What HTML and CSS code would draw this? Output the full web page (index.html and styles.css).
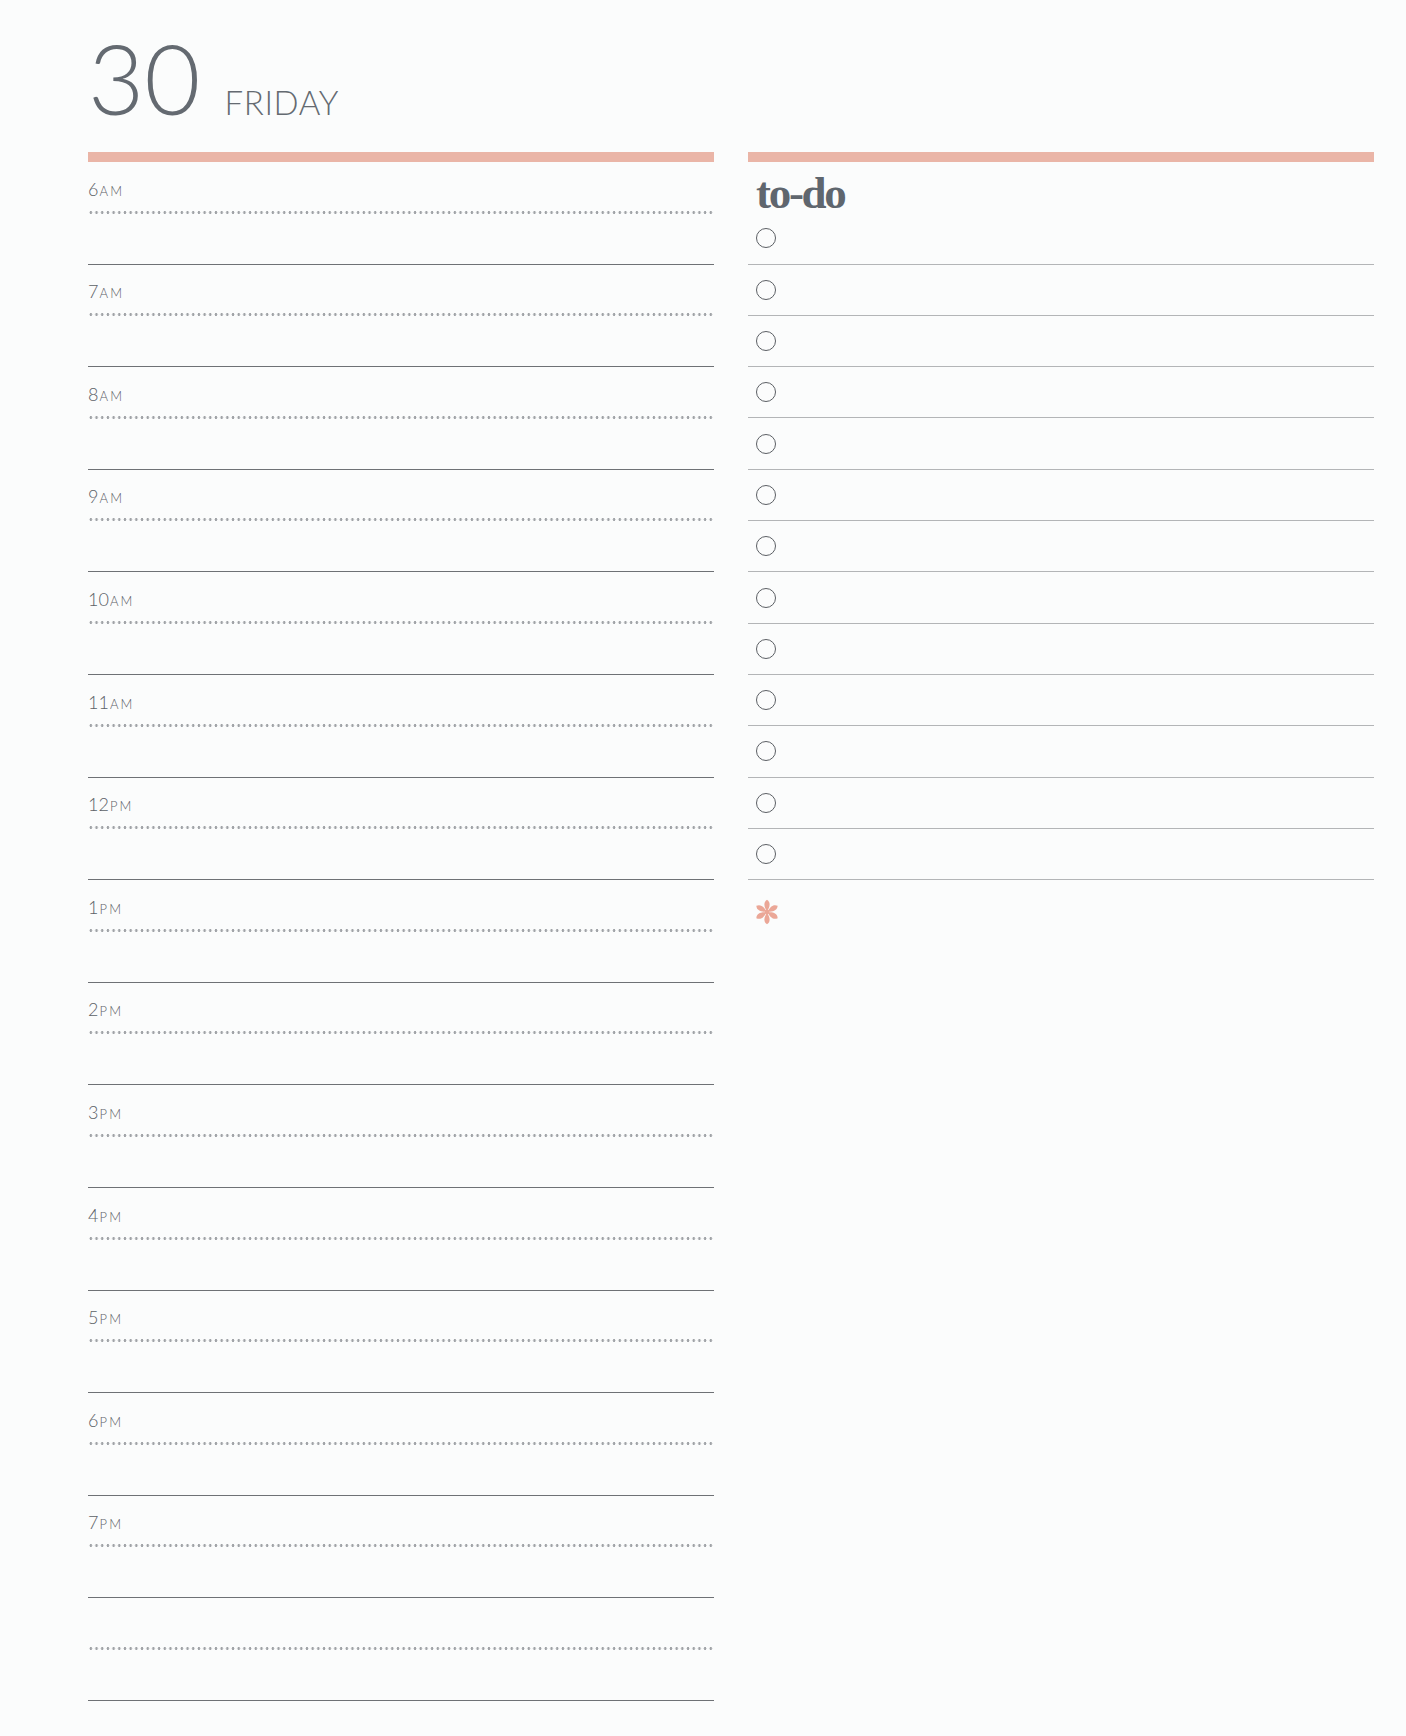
FILE: index.html
```html
<!DOCTYPE html>
<html lang="en">
<head>
<meta charset="utf-8">
<title>Friday 30</title>
<link rel="stylesheet" href="styles.css">
</head>
<body>
<div class="page">
  <header class="header">
    <span class="day">30</span>
    <span class="weekday">FRIDAY</span>
  </header>
  <main class="columns">
    <section class="schedule">
      <div class="bar"></div>
      <div class="slot"><div class="time"><span class="num">6</span><span class="mer">AM</span></div><div class="dots"></div></div>
      <div class="slot"><div class="time"><span class="num">7</span><span class="mer">AM</span></div><div class="dots"></div></div>
      <div class="slot"><div class="time"><span class="num">8</span><span class="mer">AM</span></div><div class="dots"></div></div>
      <div class="slot"><div class="time"><span class="num">9</span><span class="mer">AM</span></div><div class="dots"></div></div>
      <div class="slot"><div class="time"><span class="num">10</span><span class="mer">AM</span></div><div class="dots"></div></div>
      <div class="slot"><div class="time"><span class="num">11</span><span class="mer">AM</span></div><div class="dots"></div></div>
      <div class="slot"><div class="time"><span class="num">12</span><span class="mer">PM</span></div><div class="dots"></div></div>
      <div class="slot"><div class="time"><span class="num">1</span><span class="mer">PM</span></div><div class="dots"></div></div>
      <div class="slot"><div class="time"><span class="num">2</span><span class="mer">PM</span></div><div class="dots"></div></div>
      <div class="slot"><div class="time"><span class="num">3</span><span class="mer">PM</span></div><div class="dots"></div></div>
      <div class="slot"><div class="time"><span class="num">4</span><span class="mer">PM</span></div><div class="dots"></div></div>
      <div class="slot"><div class="time"><span class="num">5</span><span class="mer">PM</span></div><div class="dots"></div></div>
      <div class="slot"><div class="time"><span class="num">6</span><span class="mer">PM</span></div><div class="dots"></div></div>
      <div class="slot"><div class="time"><span class="num">7</span><span class="mer">PM</span></div><div class="dots"></div></div>
      <div class="slot"><div class="time"></div><div class="dots"></div></div>
    </section>
    <section class="todo">
      <div class="bar"></div>
      <h2 class="todo-title">to-do</h2>
      <ul class="todo-list">
        <li class="todo-item"><span class="check"></span></li>
        <li class="todo-item"><span class="check"></span></li>
        <li class="todo-item"><span class="check"></span></li>
        <li class="todo-item"><span class="check"></span></li>
        <li class="todo-item"><span class="check"></span></li>
        <li class="todo-item"><span class="check"></span></li>
        <li class="todo-item"><span class="check"></span></li>
        <li class="todo-item"><span class="check"></span></li>
        <li class="todo-item"><span class="check"></span></li>
        <li class="todo-item"><span class="check"></span></li>
        <li class="todo-item"><span class="check"></span></li>
        <li class="todo-item"><span class="check"></span></li>
        <li class="todo-item"><span class="check"></span></li>
      </ul>
      <div class="star">
        <svg width="26" height="26" viewBox="-13 -13 26 26" aria-hidden="true">
          <g fill="#eba797">
            <path d="M0,-1 C-3.2,-5 -3.8,-10 0,-12.3 C3.8,-10 3.2,-5 0,-1 Z"/>
            <path d="M0,-1 C-3.2,-5 -3.8,-10 0,-12.3 C3.8,-10 3.2,-5 0,-1 Z" transform="rotate(60)"/>
            <path d="M0,-1 C-3.2,-5 -3.8,-10 0,-12.3 C3.8,-10 3.2,-5 0,-1 Z" transform="rotate(120)"/>
            <path d="M0,-1 C-3.2,-5 -3.8,-10 0,-12.3 C3.8,-10 3.2,-5 0,-1 Z" transform="rotate(180)"/>
            <path d="M0,-1 C-3.2,-5 -3.8,-10 0,-12.3 C3.8,-10 3.2,-5 0,-1 Z" transform="rotate(240)"/>
            <path d="M0,-1 C-3.2,-5 -3.8,-10 0,-12.3 C3.8,-10 3.2,-5 0,-1 Z" transform="rotate(300)"/>
            <circle r="2.4"/>
          </g>
        </svg>
      </div>
    </section>
  </main>
</div>
</body>
</html>
```
FILE: styles.css
```css
body {
  margin: 0;
  background: #fbfcfc;
  font-family: Lato, "Open Sans", sans-serif;
}

.page {
  width: 1406px;
  height: 1736px;
  box-sizing: border-box;
  padding: 0 32px 0 88px;
}

.header {
  height: 152px;
  box-sizing: border-box;
  padding-top: 20px;
  display: flex;
  align-items: baseline;
  color: #646a71;
}

.day {
  font-size: 97px;
  font-weight: 300;
  line-height: 1.2;
}

.weekday {
  font-size: 33px;
  font-weight: 300;
  margin-left: 24px;
  letter-spacing: 0.6px;
}

.columns {
  display: grid;
  grid-template-columns: 626px 626px;
  column-gap: 34px;
}

.bar {
  height: 10px;
  background: #eab5a7;
}

.slot {
  height: 102.6px;
  box-sizing: border-box;
  border-bottom: 1px solid #6e7175;
  padding-top: 16.6px;
}

.time {
  height: 20px;
  line-height: 20px;
  font-size: 18px;
  font-weight: 300;
  color: #5c6167;
  white-space: nowrap;
}

.num {
  font-size: 18px;
}

.mer {
  font-size: 13px;
  letter-spacing: 2.2px;
  margin-left: 1px;
}

.dots {
  height: 3px;
  margin-top: 12px;
  background-image: radial-gradient(circle at center, #a0a3a7 1.1px, rgba(160, 163, 167, 0) 1.6px);
  background-size: 5.7px 3px;
  background-repeat: repeat-x;
}

.todo-title {
  margin: 0;
  height: 51.3px;
  line-height: 62px;
  padding-left: 8px;
  font-family: "Liberation Serif", "Times New Roman", serif;
  font-weight: 700;
  font-size: 45px;
  letter-spacing: -2.3px;
  color: #5f666e;
}

.todo-list {
  list-style: none;
  margin: 0;
  padding: 0;
}

.todo-item {
  height: 51.3px;
  box-sizing: border-box;
  border-bottom: 1px solid #b3b5b7;
  display: flex;
  align-items: center;
  padding-left: 8px;
}

.check {
  width: 20px;
  height: 20px;
  box-sizing: border-box;
  border: 1px solid #5b5f64;
  border-radius: 50%;
}

.star {
  margin-top: 19px;
  padding-left: 6px;
  height: 26px;
}

.star svg {
  display: block;
}
```
